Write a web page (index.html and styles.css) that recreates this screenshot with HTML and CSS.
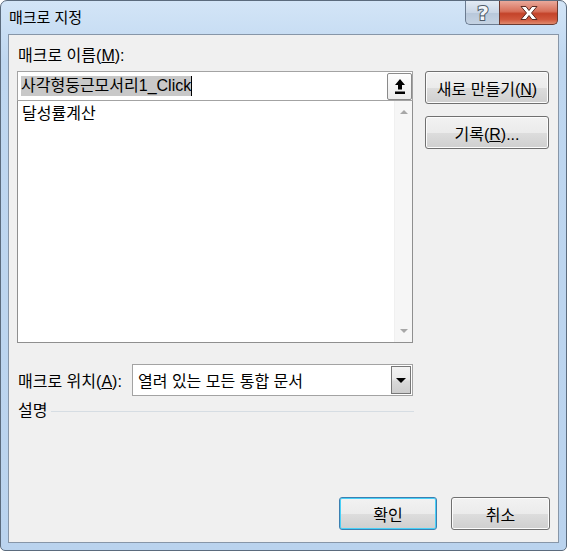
FILE: index.html
```html
<!DOCTYPE html>
<html lang="ko">
  <head>
    <meta charset="UTF-8" />
    <meta name="viewport" content="width=device-width, initial-scale=1.0" />
    <title>매크로 지정</title>
    <link rel="stylesheet" href="styles.css">
  </head>
  <body>
    <div class="window">
      <div class="titlebar">
        <div class="title">매크로 지정</div>
        <div class="caption-btns">
          <div class="help-btn">
            <svg width="20" height="24" viewBox="0 0 20 24">
              <text x="10" y="19" text-anchor="middle" class="qmark">?</text>
            </svg>
          </div>
          <div class="close-btn">
            <svg width="22" height="16" viewBox="0 0 22 16">
              <path d="M3 1.5 H8 L11 5.5 L14 1.5 H19 L13.5 8 L19 14.5 H14 L11 10.5 L8 14.5 H3 L8.5 8 Z"
                    fill="#fff" stroke="#5a2a22" stroke-width="1" stroke-linejoin="round" />
            </svg>
          </div>
        </div>
      </div>

      <div class="client">
        <div class="top">
          <div class="left-col">
            <div class="label">매크로 이름(<u>M</u>):</div>
            <div class="namebox">
              <span class="sel">사각형둥근모서리1_Click</span><span class="caret"></span>
              <div class="pick-btn">
                <svg width="12" height="17" viewBox="0 0 12 17">
                  <path d="M6 1 L11 7 H8 V11.5 H4 V7 H1 Z" fill="#000" />
                  <rect x="1" y="13.5" width="10" height="2.5" fill="#000" />
                </svg>
              </div>
            </div>
            <div class="listbox">
              <div class="list-items">
                <div class="item">달성률계산</div>
              </div>
              <div class="scroll">
                <span class="arrow up"></span>
                <span class="arrow down"></span>
              </div>
            </div>
          </div>
          <div class="right-col">
            <button class="btn">새로 만들기(<u>N</u>)</button>
            <button class="btn">기록(<u>R</u>)...</button>
          </div>
        </div>

        <div class="where">
          <div class="where-label">매크로 위치(<u>A</u>):</div>
          <div class="combo">
            <span class="combo-text">열려 있는 모든 통합 문서</span>
            <div class="combo-btn"><span class="tri"></span></div>
          </div>
        </div>

        <div class="desc">
          <span>설명</span>
          <div class="desc-line"></div>
        </div>

        <div class="bottom">
          <button class="btn btn-ok">확인</button>
          <button class="btn btn-cancel">취소</button>
        </div>
      </div>
    </div>
  </body>
</html>
```

FILE: styles.css
```css
body {
  margin: 0;
  font-family: "Liberation Sans", "Noto Sans CJK KR", sans-serif;
  color: #000;
  background: #fff;
}

.window {
  width: 567px;
  height: 551px;
  box-sizing: border-box;
  border: 1px solid #5b6b7d;
  border-radius: 7px 7px 5px 5px;
  background: linear-gradient(to bottom, #d3e5f7, #bfd7f0 60px, #bad3ee);
  display: flex;
  flex-direction: column;
  overflow: hidden;
}

.titlebar {
  height: 33px;
  display: flex;
  justify-content: space-between;
  align-items: flex-start;
  flex-shrink: 0;
}

.title {
  font-size: 15px;
  line-height: 20px;
  margin: 7px 0 0 8px;
}

.caption-btns {
  display: flex;
  margin-right: 8px;
}

.help-btn {
  width: 34px;
  height: 24px;
  box-sizing: border-box;
  border: 1px solid #6b7b90;
  border-top: none;
  border-right: none;
  border-radius: 0 0 0 5px;
  background: linear-gradient(to bottom, #e3ebf4, #c9d6e6 50%, #b7c7da 51%, #c5d3e3);
  display: flex;
  justify-content: center;
  align-items: center;
}

.help-btn svg {
  overflow: visible;
}

.qmark {
  font-family: "DejaVu Sans", sans-serif;
  font-weight: bold;
  font-size: 20px;
  fill: #f2f5f9;
  stroke: #4f5b69;
  stroke-width: 2px;
  paint-order: stroke fill;
}

.close-btn {
  width: 59px;
  height: 24px;
  box-sizing: border-box;
  border: 1px solid #6b3a30;
  border-top: none;
  border-radius: 0 0 5px 0;
  background: linear-gradient(to bottom, #e9a99b, #d7705a 45%, #c4432a 55%, #d0573c 80%, #e08a6e);
  display: flex;
  justify-content: center;
  align-items: center;
}

.client {
  flex: 1;
  margin: 0 7px 7px;
  border: 1px solid #8796a8;
  background: #f0f0f0;
  padding: 10px 8px 12px;
  display: flex;
  flex-direction: column;
  font-size: 16px;
}

.top {
  display: flex;
  gap: 12px;
}

.left-col {
  width: 396px;
}

.label {
  line-height: 22px;
  padding-left: 1px;
  margin-bottom: 4px;
}

.namebox {
  height: 30px;
  box-sizing: border-box;
  border: 1px solid #a3a3a3;
  background: #fff;
  display: flex;
  align-items: center;
  padding-left: 3px;
}

.sel {
  background: #c8c8c8;
  line-height: 20px;
  height: 20px;
}

.caret {
  width: 1px;
  height: 20px;
  background: #000;
}

.pick-btn {
  width: 25px;
  height: 27px;
  box-sizing: border-box;
  margin-left: auto;
  border: 1px solid #8a8a8a;
  border-radius: 2px;
  background: linear-gradient(to bottom, #fdfdfd, #ececec);
  display: flex;
  justify-content: center;
  align-items: center;
}

.listbox {
  height: 242px;
  box-sizing: border-box;
  border: 1px solid #8f8f8f;
  border-top: none;
  background: #fff;
  display: flex;
}

.list-items {
  flex: 1;
  padding: 3px 4px;
}

.item {
  line-height: 20px;
}

.scroll {
  width: 17px;
  background: #f6f6f6;
  border-left: 1px solid #f0f0f0;
  display: flex;
  flex-direction: column;
  justify-content: space-between;
  align-items: center;
  padding: 9px 0;
}

.arrow {
  width: 0;
  height: 0;
  border-left: 4px solid transparent;
  border-right: 4px solid transparent;
}

.arrow.up {
  border-bottom: 4px solid #a7a7a7;
}

.arrow.down {
  border-top: 4px solid #a7a7a7;
}

.right-col {
  display: flex;
  flex-direction: column;
  gap: 12px;
  padding-top: 26px;
}

.btn {
  font-family: "Liberation Sans", "Noto Sans CJK KR", sans-serif;
  font-size: 16px;
  color: #000;
  width: 124px;
  height: 33px;
  padding: 0;
  border: 1px solid #707070;
  border-radius: 3px;
  background: linear-gradient(to bottom, #f2f2f2, #ebebeb 50%, #dddddd 51%, #cfcfcf);
  box-shadow: inset 0 0 0 1px #fcfcfc;
}

.where {
  display: flex;
  align-items: center;
  margin-top: 21px;
}

.where-label {
  width: 115px;
  padding-left: 1px;
  box-sizing: border-box;
}

.combo {
  width: 281px;
  height: 32px;
  box-sizing: border-box;
  border: 1px solid #a3a3a3;
  background: #fff;
  display: flex;
  align-items: center;
  padding: 1px;
}

.combo-text {
  flex: 1;
  padding-left: 4px;
}

.combo-btn {
  width: 20px;
  height: 100%;
  box-sizing: border-box;
  border: 1px solid #777;
  background: linear-gradient(to bottom, #f3f3f3, #ebebeb 45%, #d9d9d9 55%, #cdcdcd);
  display: flex;
  justify-content: center;
  align-items: center;
}

.tri {
  width: 0;
  height: 0;
  border-left: 5px solid transparent;
  border-right: 5px solid transparent;
  border-top: 5px solid #000;
}

.desc {
  display: flex;
  align-items: center;
  gap: 4px;
  margin-top: 5px;
  line-height: 20px;
  padding-left: 1px;
  width: 396px;
}

.desc-line {
  flex: 1;
  height: 1px;
  background: #d6dde3;
}

.bottom {
  margin-top: auto;
  display: flex;
  justify-content: flex-end;
  gap: 14px;
}

.btn-ok {
  width: 98px;
  border-color: #3c7fb1;
  box-shadow: inset 0 0 0 1px #48d0f7;
}

.btn-cancel {
  width: 99px;
}
```
